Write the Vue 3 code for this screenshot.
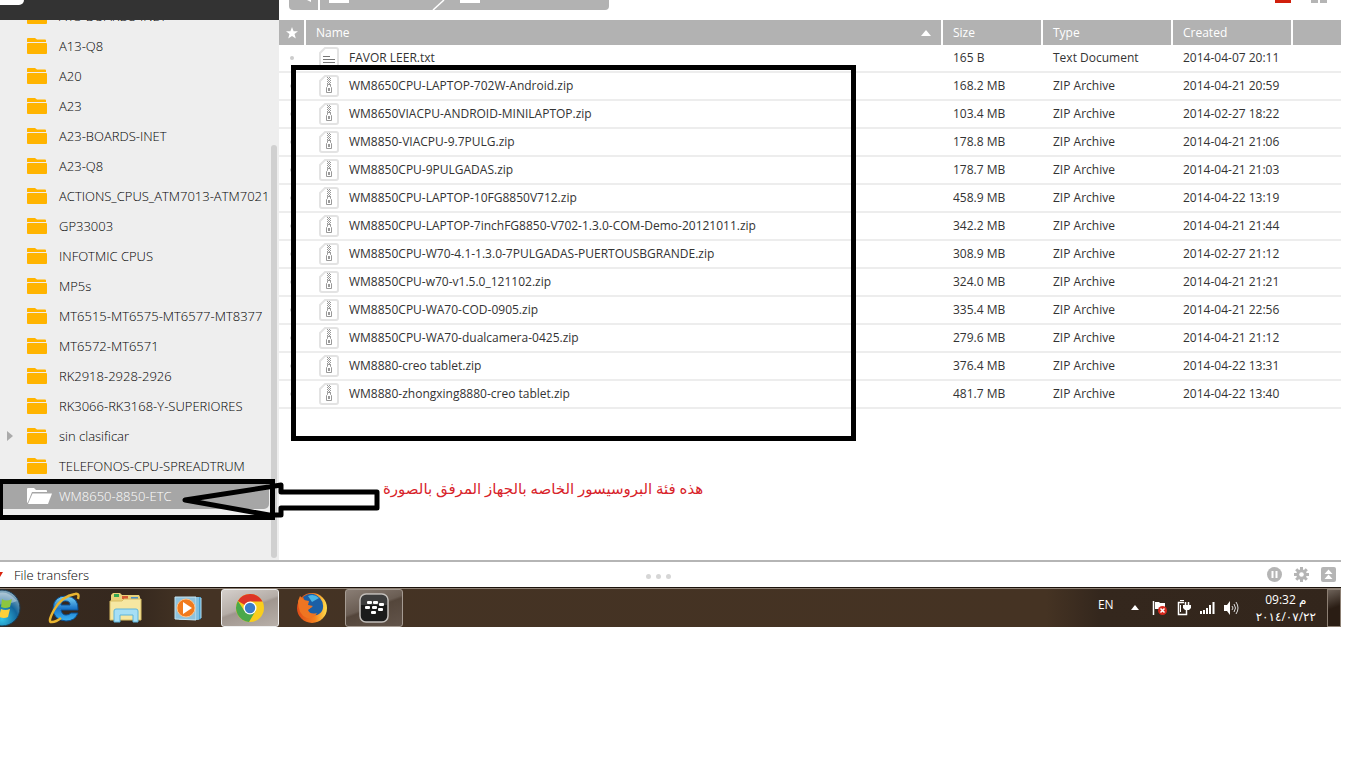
<template>
    <div class="screen">
        <div class="workspace">
            <aside class="sidebar">
                <div class="side_top"><span class="side_tab"></span></div>
                <nav class="tree_wrap">
                    <ul class="tree">
                        <li v-for="item in folders" :key="item" :class="{ active: item == current }">
                            <i :class="{ arrow: item == 'sin clasificar' }"></i>
                            <a href="#" @click.prevent="current = item">
                                <svg v-if="item == current" width="26" height="16" viewBox="0 0 26 16">
                                    <path d="M0 15V1q0-1 1-1h6l2 2h10q1 0 1 1v1H5L1 14z" fill="#fff" />
                                    <path d="M5.500 5.500H25L21 16H1z" fill="#fff" />
                                </svg>
                                <svg v-else width="26" height="16" viewBox="0 0 26 16">
                                    <path d="M0 4V1q0-1 1-1h7l2 1.500h8q1 0 1 1V4z" fill="#ffb400" />
                                    <rect y="5" width="20" height="11" rx="1" fill="#ffb400" />
                                </svg>
                                <span>{{ item }}</span>
                            </a>
                        </li>
                    </ul>
                    <div class="scrollbar"></div>
                </nav>
            </aside>
            <main class="main">
                <div class="toolbar">
                    <div class="crumbs">
                        <button class="back" aria-label="Back">
                            <svg width="10" height="3"><path d="M4 0h4v2z" fill="#fff" /></svg>
                        </button>
                        <button class="crumb first" aria-label="Parent folder"><i></i></button>
                        <svg class="slash" width="14" height="10"><path d="M1 10L12 0" stroke="#fff" stroke-width="1.500" /></svg>
                        <button class="crumb" aria-label="Current folder"><i></i></button>
                    </div>
                    <div class="views">
                        <button class="list_view" aria-label="List view"></button>
                        <button class="grid_view" aria-label="Grid view"><i></i><i></i></button>
                    </div>
                </div>
                <table>
                    <colgroup>
                        <col class="c_star" />
                        <col />
                        <col class="c_size" />
                        <col class="c_type" />
                        <col class="c_date" />
                        <col class="c_end" />
                    </colgroup>
                    <thead>
                        <tr>
                            <th class="star">
                                <svg width="12" height="12" viewBox="0 0 12 12">
                                    <path d="M6 0l1.600 4.200H12L8.500 7l1.300 4.500L6 8.900l-3.800 2.600L3.500 7 0 4.200h4.400z" fill="#fff" />
                                </svg>
                            </th>
                            <th>
                                <button class="sort" @click="asc = !asc">
                                    Name
                                    <svg width="10" height="6" :class="{ down: !asc }"><path d="M5 0l5 6H0z" fill="#fff" /></svg>
                                </button>
                            </th>
                            <th>Size</th>
                            <th>Type</th>
                            <th>Created</th>
                            <th></th>
                        </tr>
                    </thead>
                    <tbody>
                        <tr v-for="f in sorted" :key="f.name">
                            <td class="star"><i class="dot"></i></td>
                            <td class="name">
                                <div class="file">
                                    <svg width="20" height="22" viewBox="0 0 20 22">
                                        <path d="M6 1h11q2 0 2 2v16q0 2-2 2H3q-2 0-2-2V6z" fill="#fff" stroke="#e3e3e3" stroke-width="2" />
                                        <path v-if="f.type == 'Text Document'" d="M4 9.500h7M4 12.500h12M4 15.500h12M4 18.500h3" stroke="#777" />
                                        <g v-else>
                                            <path d="M8.500 2v8M10.500 2v8" stroke="#999" stroke-dasharray="1 1" />
                                            <path d="M9.500 3v7M11.500 3v7" stroke="#999" stroke-dasharray="1 1" />
                                            <path d="M8.500 9.500h3v2l1 1v5h-5v-5l1-1z" fill="#fff" stroke="#999" />
                                            <path d="M9 13h2v3H9z" fill="#999" />
                                        </g>
                                    </svg>
                                    <span>{{ f.name }}</span>
                                </div>
                            </td>
                            <td>{{ f.size }}</td>
                            <td>{{ f.type }}</td>
                            <td>{{ f.date }}</td>
                            <td></td>
                        </tr>
                    </tbody>
                </table>
            </main>
        </div>

        <footer class="transfers">
            <button class="transfer_btn">
                <svg width="4" height="5"><path d="M0 0h3L0 5z" fill="#d9230f" /></svg>
                File transfers
            </button>
            <div class="dots"><i></i><i></i><i></i></div>
            <div class="transfer_tools">
                <button aria-label="Pause">
                    <svg width="15" height="15" viewBox="0 0 15 15">
                        <circle cx="7.500" cy="7.500" r="7.500" fill="#b5b5b5" />
                        <path d="M5.500 4v7M9.500 4v7" stroke="#fff" stroke-width="2" />
                    </svg>
                </button>
                <button aria-label="Settings">
                    <svg width="15" height="15" viewBox="0 0 15 15">
                        <g stroke="#b5b5b5" stroke-width="3">
                            <path d="M7.500 0v15M0 7.500h15M2.200 2.200l10.600 10.600M12.800 2.200L2.200 12.800" />
                        </g>
                        <circle cx="7.500" cy="7.500" r="5.200" fill="#b5b5b5" />
                        <circle cx="7.500" cy="7.500" r="2.300" fill="#fff" />
                    </svg>
                </button>
                <button aria-label="Expand">
                    <svg width="15" height="15" viewBox="0 0 15 15">
                        <rect width="15" height="15" rx="2" fill="#b5b5b5" />
                        <path d="M7.500 2.500l4 4.500h-8zM7.500 7.500l4 4.500h-8z" fill="#fff" />
                    </svg>
                </button>
            </div>
        </footer>

        <div class="taskbar">
            <button class="start" aria-label="Start">
                <svg width="22" height="38" viewBox="0 0 22 38">
                    <defs>
                        <radialGradient id="orb" cx="2" cy="30" r="26" gradientUnits="userSpaceOnUse">
                            <stop offset="0" stop-color="#35c4e8" />
                            <stop offset=".6" stop-color="#13669c" />
                            <stop offset="1" stop-color="#7fa6bd" />
                        </radialGradient>
                    </defs>
                    <circle cx="2" cy="19" r="18" fill="url(#orb)" stroke="#1b3c55" />
                    <path d="M-14 14Q2-6 17 12q-14 6-31 2z" fill="#fff" opacity=".35" />
                    <path d="M2 10q4 3 10 0l-2 8q-5 2-9 0z" fill="#8dc63f" />
                    <path d="M1 20q4 2 9 0l-2 8q-4 2-9 0z" fill="#ffd13b" />
                    <path d="M0 9v8l-3-1V8z" fill="#f26522" />
                </svg>
            </button>
            <button class="task" aria-label="Internet Explorer">
                <svg width="34" height="34" viewBox="0 0 34 34">
                    <defs>
                        <linearGradient id="ie" x2="0" y2="1">
                            <stop offset="0" stop-color="#7fd8f8" />
                            <stop offset=".5" stop-color="#1c76c8" />
                            <stop offset="1" stop-color="#3bb3f3" />
                        </linearGradient>
                    </defs>
                    <path d="M31 19H14q1 5 5 5 3 0 5-2h7q-3 8-12 8Q6 29 6 17 7 5 19 5q13 1 12 14zM14 14h9q0-4-4.500-4T14 14z" fill="url(#ie)" stroke="#0a4f91" />
                    <path d="M31 8q2-6-3-5Q15 5 7 19 0 32 5 31q4 0 9-4" fill="none" stroke="#e9b530" stroke-width="2.500" />
                </svg>
            </button>
            <button class="task" aria-label="Explorer">
                <svg width="34" height="34" viewBox="0 0 34 34">
                    <path d="M2 6V4l2-2h7l2 2h17l1 2v22H2z" fill="#e9d27a" />
                    <path d="M5 3h5v3H5z" fill="#34a853" />
                    <path d="M13 5h6v3h-6z" fill="#d35b35" />
                    <path d="M22 6h7v3h-7z" fill="#4d91c6" />
                    <path d="M1 10h12l2-2h17v21H1z" fill="#f6e7a2" stroke="#d8bd63" />
                    <path d="M5 31V20q0-2 2-2h20q2 0 2 2v11h-5v-7H11v7z" fill="#a6dff5" stroke="#5fb4da" />
                </svg>
            </button>
            <button class="task" aria-label="Media Player">
                <svg width="34" height="34" viewBox="0 0 34 34">
                    <path d="M8 6h22v22l-4 1H8z" fill="#4a9fce" />
                    <path d="M27 6v23M30 7v20" stroke="#b9e2f4" />
                    <path d="M4 6h21v23l-21-1z" fill="#8fc3de" stroke="#c6e5f2" />
                    <circle cx="15" cy="17" r="9" fill="#f17a1d" stroke="#ffc48b" />
                    <path d="M12 11l9 6-9 6z" fill="#fff" />
                </svg>
            </button>
            <button class="task open on" aria-label="Chrome">
                <svg width="30" height="30" viewBox="0 0 30 30">
                    <circle cx="15" cy="15" r="14" fill="#f9ce1d" />
                    <path d="M15 15L2.900 8A14 14 0 0 1 27.500 8.500H15z" fill="#dd3527" />
                    <path d="M2.900 8A14 14 0 0 0 14 29l6.500-11H9.500z" fill="#4aa84b" />
                    <circle cx="15" cy="15" r="6.500" fill="#fff" />
                    <circle cx="15" cy="15" r="5.200" fill="#3a7cc9" />
                </svg>
            </button>
            <button class="task" aria-label="Firefox">
                <svg width="32" height="32" viewBox="0 0 32 32">
                    <defs>
                        <linearGradient id="fox" x2="1" y2="0">
                            <stop offset="0" stop-color="#df4b18" />
                            <stop offset=".6" stop-color="#f58220" />
                            <stop offset="1" stop-color="#ffe14d" />
                        </linearGradient>
                    </defs>
                    <circle cx="16" cy="16" r="15" fill="url(#fox)" />
                    <path d="M7 5q9-7 17 1 5 6 2 13-3 5-9 4-6-1-6-5l5-3-5-2z" fill="#1b5fa6" />
                    <path d="M12 4q6-3 11 2l-7 4z" fill="#49b4e4" />
                    <path d="M2 9l2-5 4 4 5 1-1 4 5 1-5 4q2 5 9 3-3 6-10 5Q2 23 2 9z" fill="#ef7522" />
                </svg>
            </button>
            <button class="task open" aria-label="BlackBerry">
                <svg width="30" height="30" viewBox="0 0 30 30">
                    <rect x="1" y="1" width="28" height="28" rx="6" fill="#1b1b1b" stroke="#c4c0bc" stroke-width="1.500" />
                    <path d="M2 7q0-5 5-5h16q5 0 5 5v5H2z" fill="#fff" opacity=".15" />
                    <g fill="#fff">
                        <rect x="8" y="8" width="5" height="3" rx="1" />
                        <rect x="14" y="8" width="5" height="3" rx="1" />
                        <rect x="6" y="13" width="5" height="3" rx="1" />
                        <rect x="13" y="13" width="5" height="3" rx="1" />
                        <rect x="20" y="10" width="5" height="3" rx="1" />
                        <rect x="19" y="15" width="5" height="3" rx="1" />
                        <rect x="12" y="18" width="5" height="3" rx="1" />
                    </g>
                </svg>
            </button>
            <div class="tray">
                <span class="lang">EN</span>
                <svg class="up" width="8" height="5"><path d="M4 0l4 5H0z" fill="#fff" /></svg>
                <svg width="16" height="16" viewBox="0 0 16 16">
                    <path d="M1.500 1v14" stroke="#fff" stroke-width="1.500" />
                    <path d="M3 2h4l1 1h5v7H8L7 9H3z" fill="#fff" />
                    <circle cx="10.500" cy="10.500" r="4.500" fill="#d8281c" />
                    <path d="M8.500 8.500l4 4M12.500 8.500l-4 4" stroke="#fff" stroke-width="1.500" />
                </svg>
                <svg width="14" height="16" viewBox="0 0 14 16">
                    <path d="M7 2.500H1.500v12h8V13" fill="none" stroke="#fff" stroke-width="1.500" />
                    <path d="M3 .5h4" stroke="#fff" />
                    <path d="M3.500 5v7" stroke="#fff" />
                    <path d="M8.500 2v4M11.500 2v4" stroke="#fff" stroke-width="1.500" />
                    <path d="M6 5h8v3l-2 2H8L6 8z" fill="#fff" />
                    <path d="M9.500 9v4" stroke="#fff" stroke-width="1.500" />
                </svg>
                <svg width="15" height="12" viewBox="0 0 15 12">
                    <path d="M1 9v3M4 8v4M7 6v6M10 3v9M13.500 0v12" stroke="#fff" stroke-width="2" />
                </svg>
                <svg width="15" height="14" viewBox="0 0 15 14">
                    <path d="M0 4h3l3-4v14l-3-4H0z" fill="#fff" />
                    <path d="M8 5q2 2 0 4M10 3q3 4 0 8M12 1q4 6 0 12" fill="none" stroke="#ddd" />
                </svg>
                <div class="clock">
                    <p>09:32 م</p>
                    <p>٢٠١٤/٠٧/٢٢</p>
                </div>
                <button class="desk" aria-label="Show desktop"></button>
            </div>
        </div>

        <!-- marks drawn over the window -->
        <div class="mark_files"></div>
        <div class="mark_folder"></div>
        <svg class="mark_arrow" width="202" height="40" viewBox="0 0 202 40">
            <path d="M6 20L102 5v7h96v16h-96v7H90z" fill="none" stroke="#000" stroke-width="5" stroke-linejoin="round" />
        </svg>
        <p class="note" dir="rtl">هذه فئة البروسيسور الخاصه بالجهاز المرفق بالصورة</p>
    </div>
</template>

<script setup>
import { ref, computed } from "vue";

let current = ref("WM8650-8850-ETC");
let asc = ref(true);

let folders = [
    "A13-BOARDS-INET",
    "A13-Q8",
    "A20",
    "A23",
    "A23-BOARDS-INET",
    "A23-Q8",
    "ACTIONS_CPUS_ATM7013-ATM7021",
    "GP33003",
    "INFOTMIC CPUS",
    "MP5s",
    "MT6515-MT6575-MT6577-MT8377",
    "MT6572-MT6571",
    "RK2918-2928-2926",
    "RK3066-RK3168-Y-SUPERIORES",
    "sin clasificar",
    "TELEFONOS-CPU-SPREADTRUM",
    "WM8650-8850-ETC",
];

let zip = (name, size, date) => ({ name: name + ".zip", size: size + " MB", type: "ZIP Archive", date });

let files = [
    { name: "FAVOR LEER.txt", size: "165 B", type: "Text Document", date: "2014-04-07 20:11" },
    zip("WM8650CPU-LAPTOP-702W-Android", "168.2", "2014-04-21 20:59"),
    zip("WM8650VIACPU-ANDROID-MINILAPTOP", "103.4", "2014-02-27 18:22"),
    zip("WM8850-VIACPU-9.7PULG", "178.8", "2014-04-21 21:06"),
    zip("WM8850CPU-9PULGADAS", "178.7", "2014-04-21 21:03"),
    zip("WM8850CPU-LAPTOP-10FG8850V712", "458.9", "2014-04-22 13:19"),
    zip("WM8850CPU-LAPTOP-7inchFG8850-V702-1.3.0-COM-Demo-20121011", "342.2", "2014-04-21 21:44"),
    zip("WM8850CPU-W70-4.1-1.3.0-7PULGADAS-PUERTOUSBGRANDE", "308.9", "2014-02-27 21:12"),
    zip("WM8850CPU-w70-v1.5.0_121102", "324.0", "2014-04-21 21:21"),
    zip("WM8850CPU-WA70-COD-0905", "335.4", "2014-04-21 22:56"),
    zip("WM8850CPU-WA70-dualcamera-0425", "279.6", "2014-04-21 21:12"),
    zip("WM8880-creo tablet", "376.4", "2014-04-22 13:31"),
    zip("WM8880-zhongxing8880-creo tablet", "481.7", "2014-04-22 13:40"),
];

let sorted = computed(() => (asc.value ? files : [...files].reverse()));
</script>

<style>
body {
    margin: 0;
    background: #fff;
}
</style>

<style scoped>
.screen {
    position: relative;
    margin-right: 25px;
    font-family: "Open Sans", "DejaVu Sans", sans-serif;
    font-size: 12px;
    color: #333;
}
button {
    padding: 0;
    border: none;
    background: none;
    font: inherit;
    color: inherit;
    cursor: pointer;
}
p,
ul {
    margin: 0;
    padding: 0;
    list-style: none;
}
svg {
    display: block;
    flex: none;
}
.workspace {
    display: flex;
}
.sidebar {
    width: 279px;
    flex: none;
    display: flex;
    flex-direction: column;
    background: #eee;
}
.side_top {
    height: 20px;
    background: #333;
}
.side_tab {
    display: block;
    width: 24px;
    height: 5px;
    background: #fff;
    border-radius: 0 0 5px 0;
}
.tree_wrap {
    display: flex;
    overflow: hidden;
}
.tree {
    flex: 1;
    min-width: 0;
    margin-top: -19px;
    padding-bottom: 49px;
    font-size: 13px;
    font-weight: 300;
}
.tree li {
    display: flex;
    align-items: center;
    height: 26px;
    margin: 2px 0;
    padding-left: 7px;
}
.tree li + li {
    margin-top: 4px;
}
.tree li i {
    width: 20px;
    flex: none;
}
.tree li i.arrow::before {
    content: "";
    display: block;
    width: 0;
    border: 5px solid transparent;
    border-left: 6px solid #aaa;
    border-right: none;
}
.tree a {
    display: flex;
    flex: 1;
    min-width: 0;
    align-items: center;
    gap: 6px;
    color: #000;
    text-decoration: none;
    white-space: nowrap;
}
.tree .active {
    margin-right: 2px;
    background: #a6a6a6;
    border-radius: 0 5px 5px 0;
}
.tree .active a {
    color: #fff;
}
.scrollbar {
    width: 6px;
    margin: 125px 2px 2px 0;
    border-radius: 3px;
    background: #d0d0d0;
}
.main {
    flex: 1;
    min-width: 0;
}
.toolbar {
    display: flex;
    justify-content: space-between;
    height: 20px;
    padding: 0 14px 0 10px;
}
.crumbs {
    display: flex;
    width: 320px;
    height: 10px;
    background: #b2b2b2;
    border-radius: 0 0 4px 4px;
    overflow: hidden;
}
.back {
    width: 29px;
    border-right: 2px solid #fff;
    box-sizing: content-box;
}
.back svg {
    margin-left: 14px;
    margin-bottom: 7px;
}
.crumb {
    display: flex;
    padding-left: 9px;
}
.crumb.first {
    width: 112px;
}
.crumb i {
    width: 20px;
    height: 3px;
    background: #fff;
}
.slash {
    margin-right: 5px;
}
.views {
    display: flex;
    gap: 20px;
}
.list_view {
    width: 16px;
    height: 3px;
    background: #d11f0c;
}
.grid_view {
    display: flex;
    gap: 2px;
}
.grid_view i {
    width: 7px;
    height: 3px;
    background: #b5b5b5;
}
table {
    width: 100%;
    table-layout: fixed;
    border-spacing: 0;
}
.c_star {
    width: 27px;
}
.c_size {
    width: 100px;
}
.c_type {
    width: 130px;
}
.c_date {
    width: 120px;
}
.c_end {
    width: 48px;
}
th {
    height: 25px;
    padding: 0 10px;
    box-sizing: border-box;
    background: #b2b2b2;
    border-right: 2px solid #fff;
    color: #fff;
    font-weight: 400;
    text-align: left;
}
th:last-child {
    border-right: none;
}
.sort {
    display: flex;
    width: 100%;
    align-items: center;
    justify-content: space-between;
}
.down {
    transform: rotate(180deg);
}
td {
    height: 28px;
    padding: 0 10px 2px;
    box-sizing: border-box;
    border-bottom: 2px solid #ededed;
    white-space: nowrap;
}
td.name {
    padding-bottom: 0;
}
th.star {
    padding: 0 0 0 7px;
}
td.star {
    padding: 0 0 0 11px;
}
.dot {
    display: block;
    width: 4px;
    height: 4px;
    border-radius: 50%;
    background: #ccc;
}
.file {
    display: flex;
    align-items: center;
    gap: 10px;
    padding-left: 3px;
}
.file span {
    padding-bottom: 2px;
}
.transfers {
    display: flex;
    align-items: center;
    justify-content: space-between;
    height: 25px;
    border-top: 2px solid #b5b5b5;
}
.transfer_btn {
    display: flex;
    flex: 1;
    align-items: center;
    gap: 10px;
    font-size: 13px;
    font-weight: 300;
    color: #000;
}
.dots {
    display: flex;
    gap: 5px;
    padding: 4px 20px 0 0;
}
.dots i {
    width: 5px;
    height: 5px;
    border-radius: 50%;
    background: #d6d6d6;
}
.transfer_tools {
    display: flex;
    flex: 1;
    justify-content: flex-end;
    gap: 12px;
    padding-right: 5px;
}
.taskbar {
    display: flex;
    align-items: center;
    height: 40px;
    box-sizing: border-box;
    border-top: 1px solid #1c130c;
    box-shadow: inset 0 1px #8d8074;
    background: linear-gradient(90deg, #382a1f, #35281e 10%, #443324 14%, #453323 78%, #34271d 82%, #33261c);
    color: #fff;
}
.start {
    width: 35px;
}
.task {
    display: flex;
    align-items: center;
    justify-content: center;
    width: 58px;
    height: 38px;
    margin-right: 4px;
    border: 1px solid transparent;
    box-sizing: border-box;
}
.open {
    border-color: #a59b92;
    border-radius: 3px;
    background: linear-gradient(160deg, #8a7e75, #6a5d53 45%, #54463b 50%, #62544a);
}
.on {
    border-color: #eee;
    background: linear-gradient(160deg, #d5d0cc, #b5ada7 45%, #a0968f 50%, #b8b0a9);
}
.tray {
    display: flex;
    flex: 1;
    align-items: center;
    justify-content: flex-end;
    gap: 9px;
    height: 100%;
}
.lang {
    margin-right: 8px;
    padding-bottom: 6px;
}
.up {
    margin-right: 4px;
}
.clock {
    margin: 0 2px 0 8px;
    text-align: center;
    line-height: 17px;
}
.desk {
    width: 14px;
    height: 38px;
    border: 1px solid #8d8074;
    background: linear-gradient(160deg, #6d6259, #2a1d14 50%);
}
.mark_files {
    position: absolute;
    left: 291px;
    top: 65px;
    width: 565px;
    height: 376px;
    box-sizing: border-box;
    border: 5px solid #000;
    pointer-events: none;
}
.mark_folder {
    position: absolute;
    left: -1px;
    top: 479px;
    width: 276px;
    height: 41px;
    box-sizing: border-box;
    border: 5px solid #000;
    border-left-width: 4px;
    pointer-events: none;
}
.mark_arrow {
    position: absolute;
    left: 179px;
    top: 480px;
    pointer-events: none;
}
.note {
    position: absolute;
    left: 383px;
    top: 477px;
    font-family: "Liberation Serif", "DejaVu Sans", serif;
    font-size: 15px;
    line-height: 24px;
    color: #d8232a;
    white-space: nowrap;
}
</style>
